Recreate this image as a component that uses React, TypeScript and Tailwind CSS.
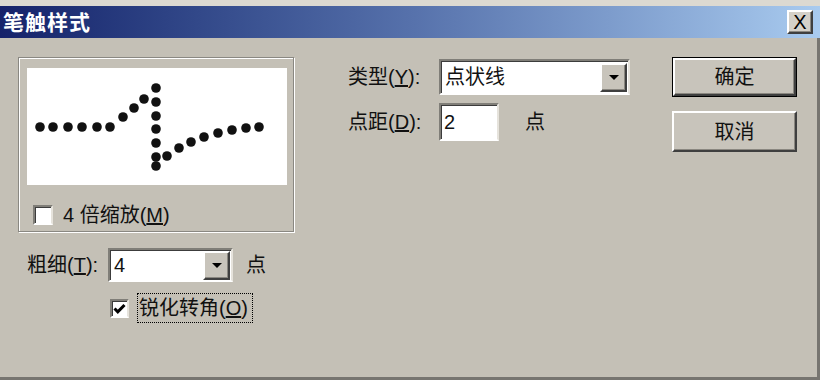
import React from "react";

const font = "font-['Liberation_Sans','Noto_Sans_CJK_SC',sans-serif]";

const dots: [number, number][] = [
  [13, 59], [26, 59], [41, 59], [55, 59], [70, 59], [83, 59],
  [96, 49], [107, 40], [117, 31],
  [129, 20], [129, 34], [129, 48], [129, 61], [129, 75], [129, 89], [129, 98],
  [140, 88], [152, 80], [164, 74], [177, 69], [191, 65], [205, 62], [219, 60], [232, 59],
];

function Sunken({ className, children }: { className?: string; children?: React.ReactNode }) {
  return (
    <div
      className={
        "bg-white border-2 border-t-[#807e78] border-l-[#807e78] border-b-white border-r-[#e6e3dc] shadow-[inset_1px_1px_0_#3c3c3c] " +
        (className ?? "")
      }
    >
      {children}
    </div>
  );
}

function Raised({ className, children }: { className?: string; children?: React.ReactNode }) {
  return (
    <div
      className={
        "bg-[#c8c4bb] border-2 border-t-white border-l-white border-b-[#3f3f3f] border-r-[#3f3f3f] shadow-[inset_-1px_-1px_0_#8a8780] flex items-center justify-center " +
        (className ?? "")
      }
    >
      {children}
    </div>
  );
}

function Arrow() {
  return <div className="w-0 h-0 border-l-[5px] border-r-[5px] border-t-[5px] border-l-transparent border-r-transparent border-t-black" />;
}

function Combo({ value, w, h }: { value: string; w: string; h: string }) {
  return (
    <Sunken className={`${w} ${h} flex items-center pl-[4px] pr-[1px]`}>
      <span className="flex-1 text-[20px] text-[#111]">{value}</span>
      <Raised className="w-[27px] h-[29px]">
        <Arrow />
      </Raised>
    </Sunken>
  );
}

function CheckBox({ checked, size }: { checked?: boolean; size: string }) {
  return (
    <Sunken className={`${size} flex items-center justify-center`}>
      {checked && (
        <svg width="13" height="11" viewBox="0 0 13 11">
          <path d="M1.5 5.5 L4.8 8.8 L11.5 2" stroke="black" strokeWidth="3" fill="none" />
        </svg>
      )}
    </Sunken>
  );
}

export default function App() {
  return (
    <div className={`w-[820px] h-[380px] bg-[#c4c0b6] flex flex-col overflow-hidden ${font} text-[#111]`}>
      <div className="h-[6px] bg-[#dcd9d1]" />
      <div className="h-[32px] bg-gradient-to-r from-[#16226a] via-[#5671ab] to-[#a9cbef] flex items-center justify-between pl-[3px] pr-[7px]">
        <span className="text-white font-bold text-[21px] tracking-[1px] font-['Noto_Sans_CJK_SC',sans-serif]">笔触样式</span>
        <Raised className="w-[26px] h-[24px] !bg-[#d4d0c8]">
          <span className="text-[20px] leading-none text-black">X</span>
        </Raised>
      </div>
      <div className="flex-1 flex border-r-[3px] border-b-[3px] border-[#777570] pl-[18px] pt-[19px]">
        {/* left column */}
        <div className="w-[276px] flex flex-col">
          <div className="h-[175px] border border-[#8a8882] shadow-[inset_1px_1px_0_#fff,1px_1px_0_#fff] pl-[8px] pt-[10px] flex flex-col">
            <div className="w-[260px] h-[117px] bg-white">
              <svg width="260" height="117" viewBox="0 0 260 117">
                {dots.map(([x, y], i) => (
                  <circle key={i} cx={x} cy={y} r="4.8" fill="#111" />
                ))}
              </svg>
            </div>
            <div className="flex items-center mt-[15px] pl-[6px] gap-[10px]">
              <CheckBox size="w-[20px] h-[20px]" />
              <span className="text-[20px]">
                4 倍缩放(<span className="underline">M</span>)
              </span>
            </div>
          </div>
          <div className="flex items-center mt-[16px] pl-[9px]">
            <span className="w-[81px] text-[20px]">
              粗细(<span className="underline">T</span>):
            </span>
            <Combo value="4" w="w-[125px]" h="h-[34px]" />
            <span className="ml-[13px] text-[20px]">点</span>
          </div>
          <div className="flex items-center mt-[11px] pl-[92px] gap-[8px]">
            <CheckBox checked size="w-[19px] h-[19px]" />
            <span className="border border-dotted border-black px-[1px] h-[30px] w-[116px] flex items-center text-[20px] whitespace-nowrap">
              锐化转角(<span className="underline">O</span>)
            </span>
          </div>
        </div>
        {/* middle column */}
        <div className="ml-[54px] pt-[2px] flex flex-col gap-[8px]">
          <div className="flex items-center">
            <span className="w-[91px] text-[20px]">
              类型(<span className="underline">Y</span>):
            </span>
            <Combo value="点状线" w="w-[191px]" h="h-[36px]" />
          </div>
          <div className="flex items-center">
            <span className="w-[91px] text-[20px]">
              点距(<span className="underline">D</span>):
            </span>
            <Sunken className="w-[60px] h-[38px] flex items-center pl-[3px]">
              <span className="text-[20px]">2</span>
            </Sunken>
            <span className="ml-[26px] text-[20px]">点</span>
          </div>
        </div>
        {/* buttons */}
        <div className="ml-[42px] flex flex-col gap-[14px]">
          <div className="border border-black">
            <Raised className="w-[123px] h-[38px]">
              <span className="text-[20px]">确定</span>
            </Raised>
          </div>
          <Raised className="w-[125px] h-[41px]">
            <span className="text-[20px]">取消</span>
          </Raised>
        </div>
      </div>
    </div>
  );
}
